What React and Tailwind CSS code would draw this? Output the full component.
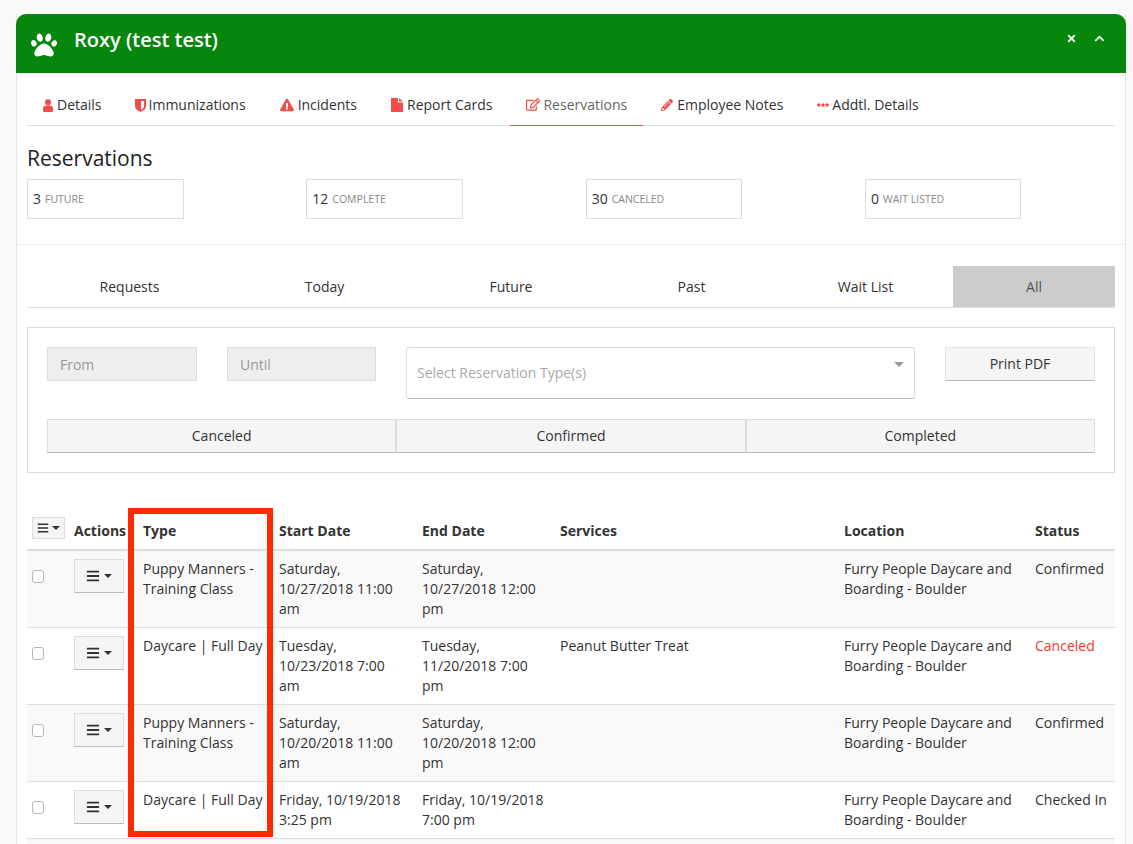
import {
  FaBars,
  FaChevronUp,
  FaEllipsisH,
  FaExclamationTriangle,
  FaPaw,
  FaPencilAlt,
  FaRegEdit,
  FaTimes,
} from "react-icons/fa";

const UserIcon = () => (
  <svg viewBox="0 0 10 13" className="w-[10px] h-[13px]" fill="currentColor">
    <circle cx="5" cy="3.2" r="3" />
    <path d="M0 11.5V9.5C0 7.5 1.5 6.5 3 6.5H7C8.5 6.5 10 7.5 10 9.5V11.5C10 12.3 9.5 13 8.5 13H1.5C.5 13 0 12.3 0 11.5Z" />
  </svg>
);

const ShieldIcon = () => (
  <svg viewBox="0 0 11 13" className="w-[11px] h-[13px]" fill="currentColor">
    <path d="M0 0H11V7C11 10 8 12 5.5 13C3 12 0 10 0 7Z" />
    <path d="M6 2H9V7C9 9 7.5 10 6 11Z" fill="#fff" />
  </svg>
);

const FileIcon = () => (
  <svg viewBox="0 0 12 14" className="w-[12px] h-[14px]" fill="currentColor">
    <path d="M0 0H7V4.5H12V14H0Z" />
    <path d="M8 0L12 3.5H8Z" />
  </svg>
);

const navTabs = [
  { label: "Details", icon: <UserIcon />, cls: "gap-1 pl-4 pr-[15px]" },
  { label: "Immunizations", icon: <ShieldIcon />, cls: "gap-[3px] px-4" },
  { label: "Incidents", icon: <FaExclamationTriangle className="w-[14px] h-[14px]" />, cls: "gap-1 px-4" },
  { label: "Report Cards", icon: <FileIcon />, cls: "gap-1 px-4" },
  { label: "Reservations", icon: <FaRegEdit className="w-[14px] h-[13px]" />, cls: "gap-[3px] px-4 border-b border-[#e74c4c] text-[#666]" },
  { label: "Employee Notes", icon: <FaPencilAlt className="w-[12px] h-[12px]" />, cls: "gap-1 px-4" },
  { label: "Addtl. Details", icon: <FaEllipsisH className="w-[12px] h-[12px]" />, cls: "gap-[3px] px-4" },
];

const stats = [
  { count: "3", label: "FUTURE" },
  { count: "12", label: "COMPLETE" },
  { count: "30", label: "CANCELED" },
  { count: "0", label: "WAIT LISTED" },
];

const subTabs = [
  { label: "Requests", width: "w-[205px]" },
  { label: "Today", width: "w-[185px]" },
  { label: "Future", width: "w-[188px]" },
  { label: "Past", width: "w-[173px]" },
  { label: "Wait List", width: "w-[175px]" },
];

const rows = [
  {
    type: "Puppy Manners - Training Class",
    start: "Saturday, 10/27/2018 11:00 am",
    end: "Saturday, 10/27/2018 12:00 pm",
    services: "",
    status: "Confirmed",
  },
  {
    type: "Daycare | Full Day",
    start: "Tuesday, 10/23/2018 7:00 am",
    end: "Tuesday, 11/20/2018 7:00 pm",
    services: "Peanut Butter Treat",
    status: "Canceled",
  },
  {
    type: "Puppy Manners - Training Class",
    start: "Saturday, 10/20/2018 11:00 am",
    end: "Saturday, 10/20/2018 12:00 pm",
    services: "",
    status: "Confirmed",
  },
  {
    type: "Daycare | Full Day",
    start: "Friday, 10/19/2018 3:25 pm",
    end: "Friday, 10/19/2018 7:00 pm",
    services: "",
    status: "Checked In",
  },
];

const headers = ["Type", "Start Date", "End Date", "Services", "Location", "Status"];

export default function App() {
  return (
    <div className="relative h-[844px] overflow-hidden bg-[#fafafa] pt-[14px] pl-4 text-sm text-[#333] font-['Open_Sans',sans-serif]">
      <div className="w-[1110px] bg-white border-x border-[#e4e4e4]">
        {/* Header */}
        <div className="-mx-px h-[59px] flex items-center justify-between rounded-t-[10px] bg-[#07860e] pl-[15px] pr-[21px] text-white">
          <div className="flex items-center gap-[17px]">
            <FaPaw className="w-[26px] h-[26px] mt-[2px]" />
            <span className="text-xl font-semibold pb-2">Roxy (test test)</span>
          </div>
          <div className="flex items-center gap-[17px] pb-[10px]">
            <FaTimes className="w-[11px] h-[11px]" />
            <FaChevronUp className="w-[11px] h-[11px]" />
          </div>
        </div>

        <div className="px-[10px]">
          {/* Main tabs */}
          <div className="mt-[11px] flex gap-[2px] h-[42px] border-b border-[#ddd]">
            {navTabs.map((tab) => (
              <div key={tab.label} className={`flex items-center h-[42px] ${tab.cls}`}>
                <span className="text-[#f44b4b]">{tab.icon}</span>
                <span>{tab.label}</span>
              </div>
            ))}
          </div>

          <h2 className="mt-[18px] text-[21px] leading-7 text-[#222]">Reservations</h2>

          {/* Stat boxes */}
          <div className="mt-[7px] grid grid-cols-[repeat(4,156.5px)] gap-x-[122.83px] pb-[25px]">
            {stats.map((stat) => (
              <div
                key={stat.label}
                className="h-[40px] flex items-center gap-1 border border-[#ddd] pl-[5px] bg-white"
              >
                <span className="text-sm">{stat.count}</span>
                <span className="text-[10.5px] text-[#888] pt-px">{stat.label}</span>
              </div>
            ))}
          </div>
        </div>

        <div className="border-t border-[#eee] px-[10px] pt-[21px]">
          {/* Sub tabs */}
          <div className="flex h-[42px] border-b border-[#e2e2e2]">
            {subTabs.map((tab) => (
              <div key={tab.label} className={`flex items-center justify-center ${tab.width}`}>
                {tab.label}
              </div>
            ))}
            <div className="flex flex-1 items-center justify-center bg-[#ccc] text-[#555]">All</div>
          </div>

          {/* Filters */}
          <div className="mt-[19px] h-[146px] border border-[#ddd] px-[19px] pt-[19px]">
            <div className="flex items-start">
              <div className="w-[150px] h-[34px] flex items-center border border-[#ddd] bg-[#eee] pl-3 pt-px text-[#999]">From</div>
              <div className="ml-[30px] w-[149px] h-[34px] flex items-center border border-[#ddd] bg-[#eee] pl-3 pt-px text-[#999]">Until</div>
              <div className="relative ml-[30px] w-[509px] h-[52px] flex items-center rounded-[3px] border border-[#ddd] border-b-[#bbb] pl-[10px] text-[#aaa]">
                Select Reservation Type(s)
                <div className="absolute right-[10px] top-[14px] w-0 h-0 border-x-[5px] border-t-[5px] border-x-transparent border-t-[#999]" />
              </div>
              <div className="ml-[30px] w-[150px] h-[34px] flex items-center justify-center border border-[#e2e2e2] border-b-[#bbb] bg-[#f5f5f5]">Print PDF</div>
            </div>
            <div className="mt-[20px] grid grid-cols-3">
              {["Canceled", "Confirmed", "Completed"].map((label) => (
                <div
                  key={label}
                  className="h-[34px] flex items-center justify-center border border-[#ddd] border-b-[#bbb] bg-[#f5f5f5]"
                >
                  {label}
                </div>
              ))}
            </div>
          </div>

          {/* Table */}
          <table className="mt-[40px] w-[1088px] table-fixed border-separate border-spacing-0">
            <colgroup>
              <col className="w-[39px]" />
              <col className="w-[69px]" />
              <col className="w-[136px]" />
              <col className="w-[143px]" />
              <col className="w-[138px]" />
              <col className="w-[284px]" />
              <col className="w-[191px]" />
              <col className="w-[88px]" />
            </colgroup>
            <thead>
              <tr>
                <th className="h-[38px] pl-[5px] pt-[4px] text-left align-top border-b-2 border-[#ddd]">
                  <div className="w-[33px] h-[22px] flex items-center justify-center gap-[3px] border border-[#ddd] bg-[#f5f5f5] text-[#333]">
                    <FaBars className="w-[12px] h-[12px]" />
                    <div className="w-0 h-0 border-x-[4px] border-t-[4px] border-x-transparent border-t-[#333]" />
                  </div>
                </th>
                <th className="px-2 text-left font-bold border-b-2 border-[#ddd] whitespace-nowrap">Actions</th>
                {headers.map((h) => (
                  <th key={h} className="px-2 text-left font-bold border-b-2 border-[#ddd]">
                    {h}
                  </th>
                ))}
              </tr>
            </thead>
            <tbody>
              {rows.map((row, i) => (
                <tr key={i} className={i % 2 === 0 ? "bg-[#f9f9f9]" : "bg-white"}>
                  <td className="pl-[5px] pt-[19px] align-top border-b border-[#ddd]">
                    <div className="w-[12px] h-[13px] rounded-[3px] border border-[#b5b5b5] bg-white" />
                  </td>
                  <td className="px-2 py-2 align-top border-b border-[#ddd]">
                    <div className="w-[50px] h-[34px] flex items-center justify-center gap-1 border border-[#ddd] border-b-[#bbb] bg-[#f5f5f5]">
                      <FaBars className="w-[14px] h-[14px]" />
                      <div className="w-0 h-0 border-x-[4px] border-t-[4px] border-x-transparent border-t-[#333]" />
                    </div>
                  </td>
                  <td className="pl-2 pr-0 py-2 leading-5 align-top border-b border-[#ddd]">{row.type}</td>
                  <td className="px-2 py-2 leading-5 align-top border-b border-[#ddd]">{row.start}</td>
                  <td className="pl-2 pr-1 py-2 leading-5 align-top border-b border-[#ddd]">{row.end}</td>
                  <td className="px-2 py-2 leading-5 align-top border-b border-[#ddd]">{row.services}</td>
                  <td className="px-2 py-2 leading-5 align-top border-b border-[#ddd]">Furry People Daycare and Boarding - Boulder</td>
                  <td className={`pl-2 pr-0 py-2 leading-5 align-top border-b border-[#ddd] ${row.status === "Canceled" ? "text-[#f0392b]" : ""}`}>
                    {row.status}
                  </td>
                </tr>
              ))}
              <tr className="bg-[#f9f9f9]">
                <td colSpan={8} className="h-10" />
              </tr>
            </tbody>
          </table>
        </div>
      </div>

      {/* Red highlight drawn over the Type column */}
      <div className="absolute left-[128px] top-[508px] w-[145px] h-[329px] border-[6px] border-[#ff2a00]" />
    </div>
  );
}
